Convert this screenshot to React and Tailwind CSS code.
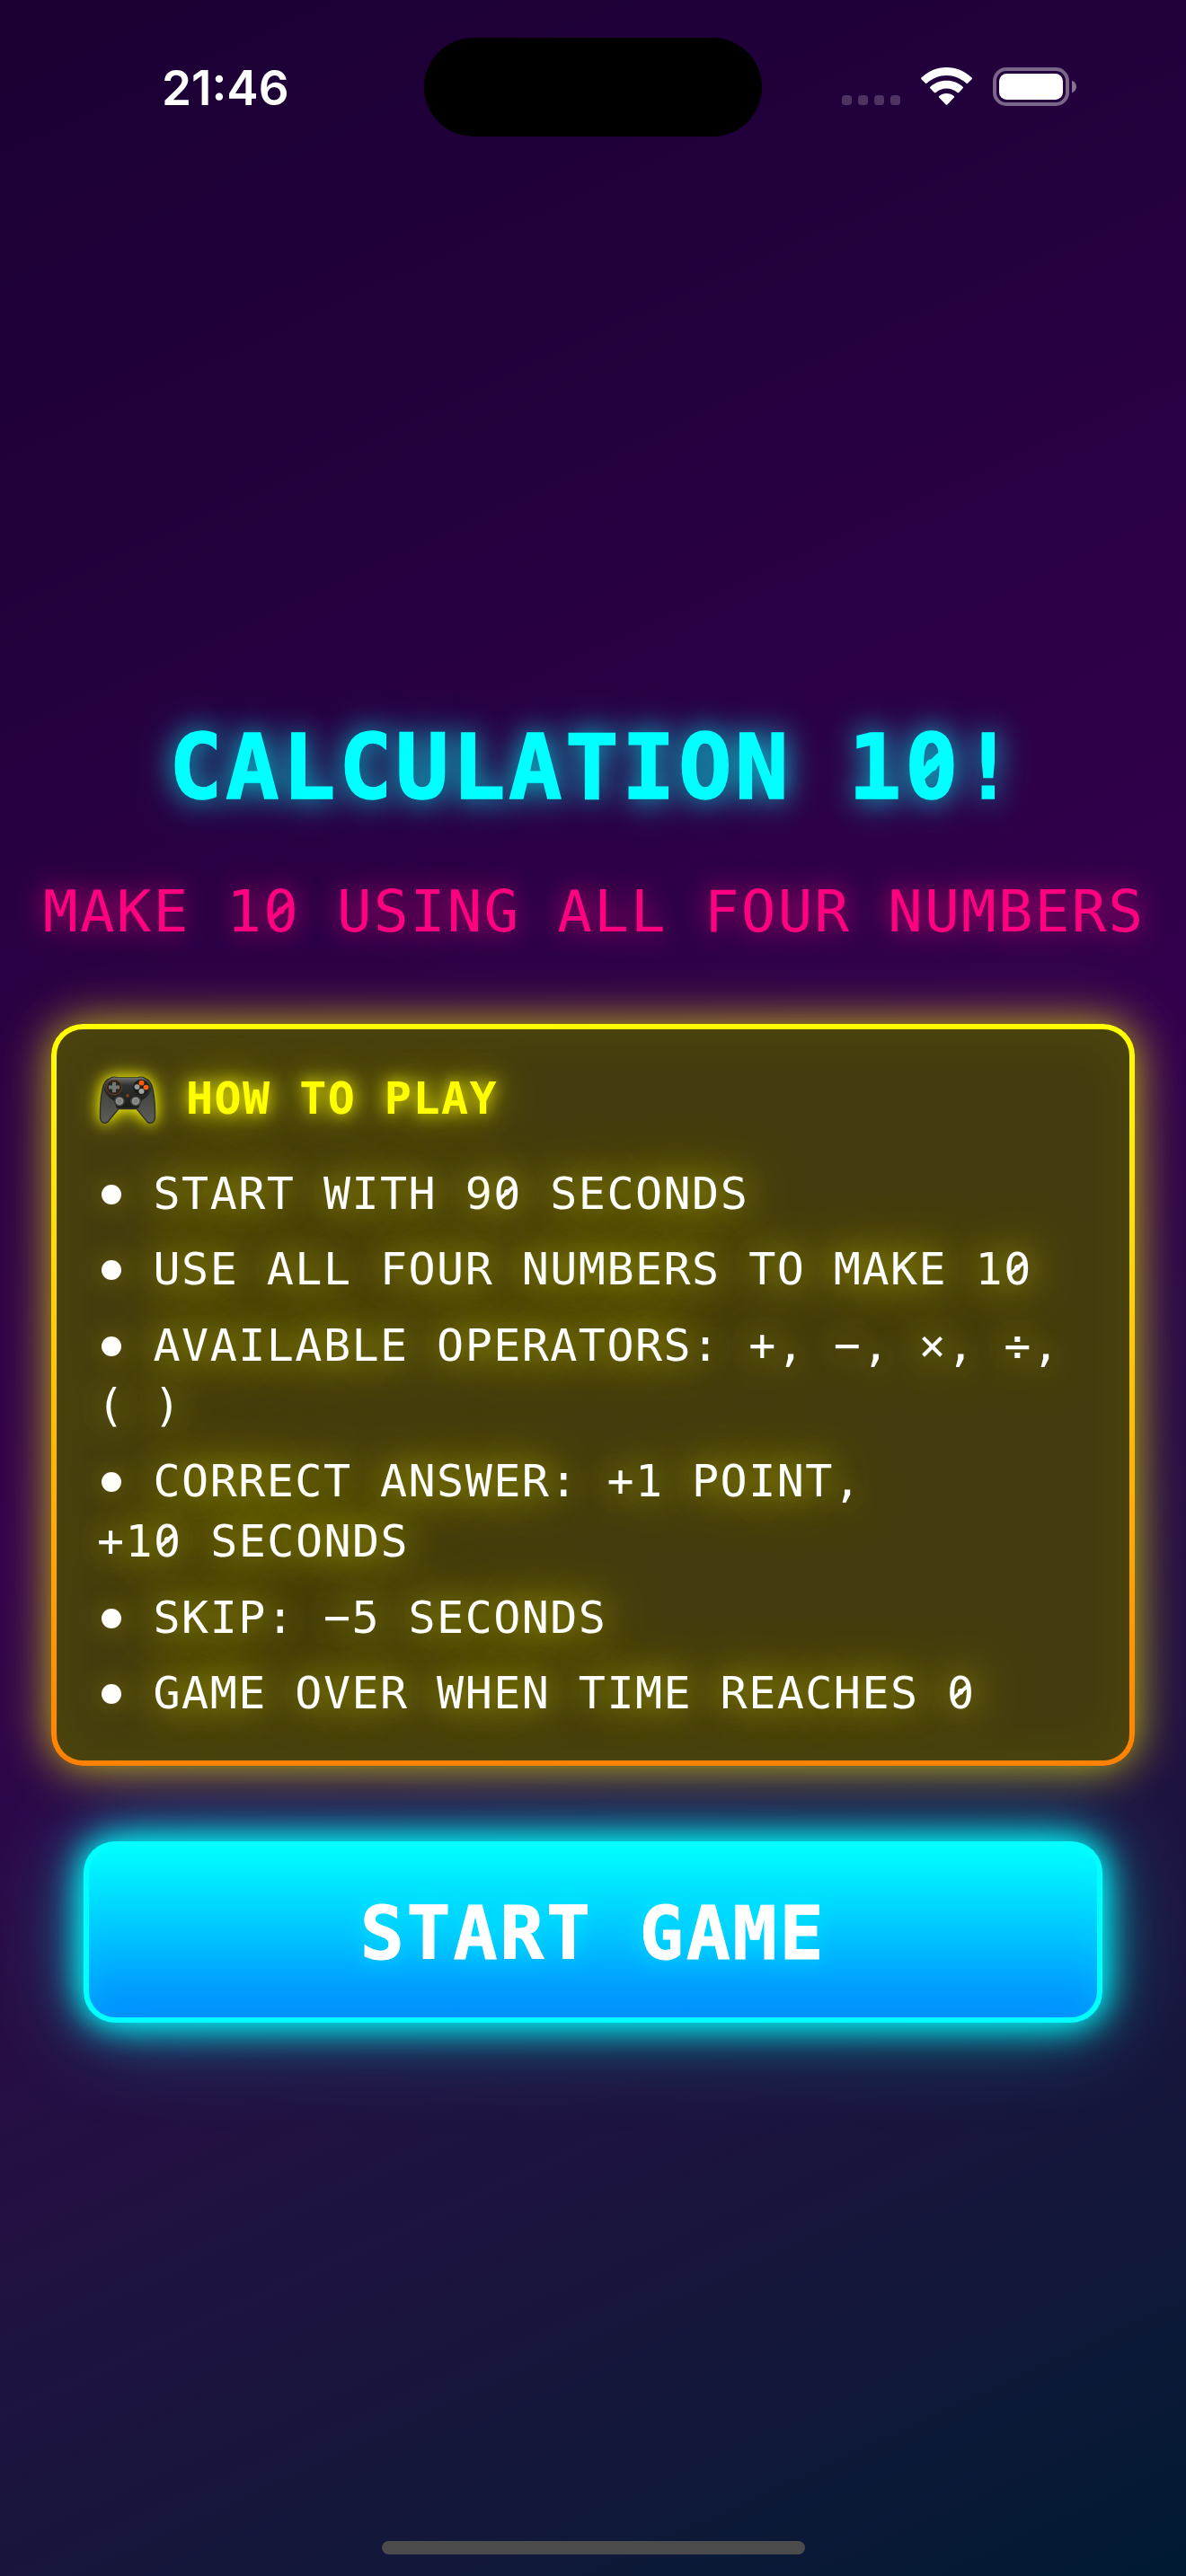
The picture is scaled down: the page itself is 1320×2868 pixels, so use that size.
import React from "react";

const rules = [
  "START WITH 90 SECONDS",
  "USE ALL FOUR NUMBERS TO MAKE 10",
  "AVAILABLE OPERATORS: +, −, ×, ÷, (\u00a0)",
  "CORRECT ANSWER: +1 POINT, +10\u00a0SECONDS",
  "SKIP: −5 SECONDS",
  "GAME OVER WHEN TIME REACHES 0",
];

// Draws every zero with a diagonal slash through its counter.
function Slashed({ text, bold = false }) {
  return text.split(/(0)/).map((part, i) =>
    part === "0" ? (
      <span
        key={i}
        className={
          bold
            ? "relative after:absolute after:top-[0.363em] after:left-[0.246em] after:h-[0.4em] after:w-[0.11em] after:rotate-[46deg] after:bg-current after:content-['']"
            : "relative after:absolute after:top-[0.363em] after:left-[0.264em] after:h-[0.4em] after:w-[0.075em] after:rotate-[48deg] after:bg-current after:content-['']"
        }
      >
        0
      </span>
    ) : (
      part
    )
  );
}

function StatusBar() {
  return (
    <header className="flex h-[152px] pt-[42px] pl-[180px] text-white">
      <div className="w-[292px] pt-[24px] font-['Inter'] text-[53px] leading-[64px] font-semibold">21:46</div>
      <div className="h-[110px] w-[376px] rounded-full bg-black" />
      <div className="mt-[64px] ml-[89px] flex h-[11px] w-[65px] gap-[7px]">
        {[0, 1, 2, 3].map((i) => (
          <span key={i} className="h-[11px] w-[11px] rounded-[3.5px] bg-white/20" />
        ))}
      </div>
      <svg className="mt-[33px] ml-[23px] h-[42px] w-[57px]" viewBox="0 0 57 42" fill="white">
        <path d="M28.5 0C39.500 0 49 4.200 56.600 11.600Q57.200 12.400 56.500 13.200L52 17.700Q51.200 18.400 50.300 17.600C44 12 36.800 9 28.500 9S13 12 6.700 17.600Q5.800 18.400 5 17.700L.5 13.200Q-.2 12.400 .4 11.600C8 4.200 17.500 0 28.500 0Z" />
        <path d="M28.500 14.800C35.700 14.800 41.700 17.300 46.700 21.700Q47.500 22.500 46.700 23.300L42.200 27.900Q41.300 28.700 40.400 27.900C37 25 33 23.400 28.500 23.400S20 25 16.600 27.900Q15.700 28.700 14.800 27.900L10.300 23.300Q9.500 22.500 10.300 21.700C15.300 17.300 21.300 14.800 28.500 14.800Z" />
        <path d="M28.500 29C31.700 29 34.500 30.100 36.800 32Q37.700 32.800 36.900 33.600L29.500 41.200Q28.500 42.200 27.500 41.200L20.100 33.600Q19.300 32.800 20.200 32C22.500 30.100 25.300 29 28.500 29Z" />
      </svg>
      <svg className="mt-[33px] ml-[23px] h-[43px] w-[94px]" viewBox="0 0 94 43" fill="none">
        <rect x="2" y="2" width="81" height="39" rx="13" stroke="white" strokeOpacity=".4" strokeWidth="4" />
        <rect x="7" y="7" width="71" height="29" rx="8.500" fill="white" />
        <path d="M88 14.500C91 15.800 93 18.200 93 21.500S91 27.200 88 28.500Z" fill="white" fillOpacity=".45" />
      </svg>
    </header>
  );
}

function Gamepad() {
  return (
    <svg
      className="mt-[8px] ml-[3px] h-[54px] w-[62px] overflow-visible [filter:drop-shadow(0_0_8px_#ffff00)_drop-shadow(0_0_14px_#ffff0066)]"
      viewBox="0 0 62 56"
      preserveAspectRatio="none"
    >
      <defs>
        <linearGradient id="grip" x1="0" y1="0" x2="0" y2="1">
          <stop offset="0" stopColor="#55564f" />
          <stop offset=".25" stopColor="#40413d" />
          <stop offset="1" stopColor="#5c5d58" />
        </linearGradient>
        <linearGradient id="face" x1="0" y1="0" x2="0" y2="1">
          <stop offset="0" stopColor="#70736f" />
          <stop offset=".25" stopColor="#30322f" />
          <stop offset="1" stopColor="#181a19" />
        </linearGradient>
      </defs>
      <path d="M11 3Q15 0 20 2H42Q47 0 51 3Q57 5 59 15Q62 30 61.500 48Q60 57 53 53L41 38H21L9 53Q2 57 .5 48Q0 30 3 15Q5 5 11 3Z" fill="url(#grip)" stroke="#2b2c29" strokeWidth="1.300" />
      <path d="M12 3Q15 1 20 2H42Q47 1 50 3Q57 8 57 17Q53 25 47 28L43 37H19L15 28Q9 25 5 17Q5 8 12 3Z" fill="url(#face)" />
      <circle cx="16" cy="13" r="8.500" fill="#242622" stroke="#7b3b14" />
      <path d="M14 7H18V11H22V15H18V19H14V15H10V11H14Z" fill="#747772" />
      <circle cx="46" cy="13" r="9" fill="#1c1e1c" />
      <circle cx="46.500" cy="8" r="3" fill="#ff5b0c" />
      <circle cx="51.500" cy="13" r="3" fill="#ff5b0c" />
      <circle cx="41.500" cy="12.500" r="3" fill="#9b9d9a" />
      <circle cx="46.500" cy="17.500" r="3" fill="#a4a6a3" />
      <circle cx="31" cy="22.500" r="2" fill="#7b3b14" />
      <circle cx="22" cy="29" r="5" fill="#92958f" stroke="#464945" strokeWidth="1.500" />
      <circle cx="22" cy="29" r="2.600" fill="#7d807c" />
      <circle cx="40" cy="29" r="5" fill="#92958f" stroke="#464945" strokeWidth="1.500" />
      <circle cx="40" cy="29" r="2.600" fill="#7d807c" />
    </svg>
  );
}

export default function App() {
  return (
    <main className="flex h-[2868px] w-[1320px] flex-col overflow-hidden bg-[linear-gradient(155.3deg_in_oklab,#1a0033_0%,#33004d_50%,#001a33_100%)] font-['DejaVu_Sans_Mono',monospace]">
      <StatusBar />
      <h1 className="mt-[642px] pl-[188px] text-[99px] leading-[122px] font-bold tracking-[3.4px] text-[#00ffff] [-webkit-text-stroke:1.5px_#00ffff] [text-shadow:0_0_30px_#00ffffbb,0_0_50px_#00ffff66]">
        <Slashed text="CALCULATION 10!" bold />
      </h1>
      <p className="mt-[56px] pl-[48px] text-[64px] leading-[86px] tracking-[2.35px] whitespace-nowrap text-[#ff0080] [text-shadow:0_0_30px_#ff0080dd]">
        <Slashed text="MAKE 10 USING ALL FOUR NUMBERS" />
      </p>
      <section className="mx-[57px] mt-[82px] h-[826px] rounded-[35px] bg-linear-to-b from-[#ffff00] to-[#ff8000] p-[6px] shadow-[0_0_48px_#ffff00b0,0_0_90px_#ffff0020]">
        <div className="h-full rounded-[29px] bg-[#443c0e] pt-[43.5px] pl-[45px] shadow-[inset_0_0_60px_#ffff0012]">
          <div className="flex h-[67px]">
            <Gamepad />
            <h2 className="ml-[34px] text-[50px] leading-[67px] font-bold tracking-[1.45px] text-[#ffff00] [text-shadow:0_0_18px_#ffff00ee,0_0_36px_#ffff0099,0_0_75px_#ffff0077]">
              HOW TO PLAY
            </h2>
          </div>
          <ul className="mt-[39px] flex w-[1104px] flex-col gap-[17.5px] text-[50px] leading-[67px] tracking-[1.45px] text-white [text-shadow:0_0_36px_#ffff0099,0_0_66px_#ffff0088]">
            {rules.map((r) => (
              <li key={r}>
                <span className="mx-[4.5px] mb-[5px] inline-block h-[22px] w-[22px] rounded-full bg-white shadow-[0_0_30px_#ffff0050]" />
                {" "}
                <Slashed text={r} />
              </li>
            ))}
          </ul>
        </div>
      </section>
      <button className="mx-[93px] mt-[84px] h-[202px] rounded-[35px] bg-[#00ffff] p-[6px] shadow-[0_0_36px_#00ffff,0_0_54px_#00ffffaa,0_0_110px_#00ffff66]">
        <span className="flex h-full items-center justify-center rounded-[29px] bg-linear-to-b from-[#00ffff] to-[#0088ff] pt-[4px] text-[81.5px] font-bold tracking-[2.8px] text-white shadow-[inset_0_0_40px_#00ffff30] [-webkit-text-stroke:1px_white] [text-shadow:0_0_30px_#00ffff99]">
          START GAME
        </span>
      </button>
      <div className="mx-auto mt-[577px] h-[15px] w-[471px] rounded-full bg-[#4b4b4b]" />
    </main>
  );
}
